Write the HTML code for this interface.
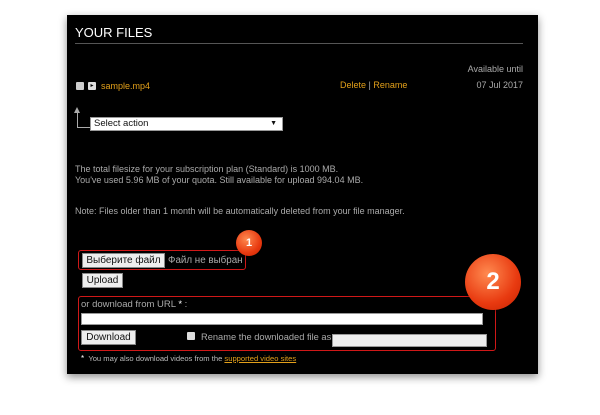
<!DOCTYPE html>
<html><head><meta charset="utf-8"><style>
body{margin:0;width:600px;height:415px;background:#fff;position:relative;overflow:hidden;font-family:"Liberation Sans","Noto Sans CJK SC",sans-serif}
.p{position:absolute;left:67px;top:15px;width:471px;height:359px;background:#000;box-shadow:0 3px 8px rgba(0,0,0,.45)}
.a{position:absolute;white-space:nowrap}
.g{color:#aaa;font-size:9px}
.o{color:#e3a01a}
.btn{position:absolute;background:#eee;border:1px solid #888;color:#111;font-size:10px;text-align:center;box-sizing:border-box;line-height:13px}
.red{position:absolute;border:1.5px solid #d01818;border-radius:3px}
.c{position:absolute;border-radius:50%;background:radial-gradient(circle at 40% 35%,#ff8a50,#e83a10 60%,#c42000);color:#fff;text-align:center;font-weight:bold;box-shadow:0 1px 3px rgba(0,0,0,.4)}
</style></head><body>
<div class="p"></div>
<div class="a" style="left:75px;top:25px;color:#fff;font-size:13px">YOUR FILES</div>
<div class="a" style="left:75px;top:43px;width:448px;height:1px;background:#555"></div>
<div class="a g" style="right:77px;top:64px;font-size:9px">Available until</div>
<div class="a" style="left:76px;top:82px;width:8px;height:8px;background:#ccc;border-radius:1px"></div>
<div class="a" style="left:88px;top:82px;width:8px;height:8px;background:#ddd;border-radius:1px;font-size:6px;line-height:8px;text-align:center">▸</div>
<div class="a o" style="left:101px;top:81px;font-size:9px">sample.mp4</div>
<div class="a o" style="left:340px;top:80px;font-size:9px">Delete <span style="color:#aaa">|</span> Rename</div>
<div class="a g" style="right:77px;top:80px;font-size:9px">07 Jul 2017</div>
<div class="a" style="left:77px;top:112px;width:1px;height:16px;background:#aaa"></div>
<div class="a" style="left:77px;top:127px;width:13px;height:1px;background:#aaa"></div>
<div class="a" style="left:74px;top:107px;width:0;height:0;border-left:3.5px solid transparent;border-right:3.5px solid transparent;border-bottom:6px solid #aaa"></div>
<div class="a" style="left:90px;top:117px;width:193px;height:14px;background:#fff;border:1px solid #999;box-sizing:border-box;font-size:9.5px;line-height:12px;padding-left:3px;color:#111">Select action<span style="position:absolute;right:5px;font-size:7px">▼</span></div>
<div class="a g" style="left:75px;top:164px">The total filesize for your subscription plan (Standard) is 1000 MB.</div>
<div class="a g" style="left:75px;top:175px">You've used 5.96 MB of your quota. Still available for upload 994.04 MB.</div>
<div class="a g" style="left:75px;top:206px">Note: Files older than 1 month will be automatically deleted from your file manager.</div>
<div class="red" style="left:78px;top:250px;width:166px;height:18px"></div>
<div class="btn" style="left:82px;top:253px;width:83px;height:15px">Выберите файл</div>
<div class="a" style="left:168px;top:255px;color:#aaa;font-size:9.8px">Файл не выбран</div>
<div class="c" style="left:236px;top:230px;width:26px;height:26px;font-size:11px;line-height:26px">1</div>
<div class="btn" style="left:82px;top:273px;width:41px;height:15px">Upload</div>
<div class="red" style="left:78px;top:296px;width:416px;height:53px"></div>
<div class="c" style="left:465px;top:254px;width:56px;height:56px;font-size:24px;line-height:56px">2</div>
<div class="a g" style="left:81px;top:299px;font-size:9.5px">or download from URL <span style="color:#fff">*</span> :</div>
<div class="a" style="left:81px;top:313px;width:402px;height:12px;background:#fff;border:1px solid #999;box-sizing:border-box"></div>
<div class="btn" style="left:81px;top:330px;width:55px;height:15px">Download</div>
<div class="a" style="left:187px;top:332px;width:8px;height:8px;background:#ddd;border-radius:1px"></div>
<div class="a g" style="left:201px;top:332px;font-size:9.3px">Rename the downloaded file as</div>
<div class="a" style="left:332px;top:334px;width:155px;height:13px;background:#eee;border:1px solid #999;box-sizing:border-box"></div>
<div class="a" style="left:81px;top:354px;font-size:7.6px;color:#bbb"><span style="color:#fff;font-size:8px">*</span> &nbsp;You may also download videos from the <span class="o" style="text-decoration:underline">supported video sites</span></div>
</body></html>
